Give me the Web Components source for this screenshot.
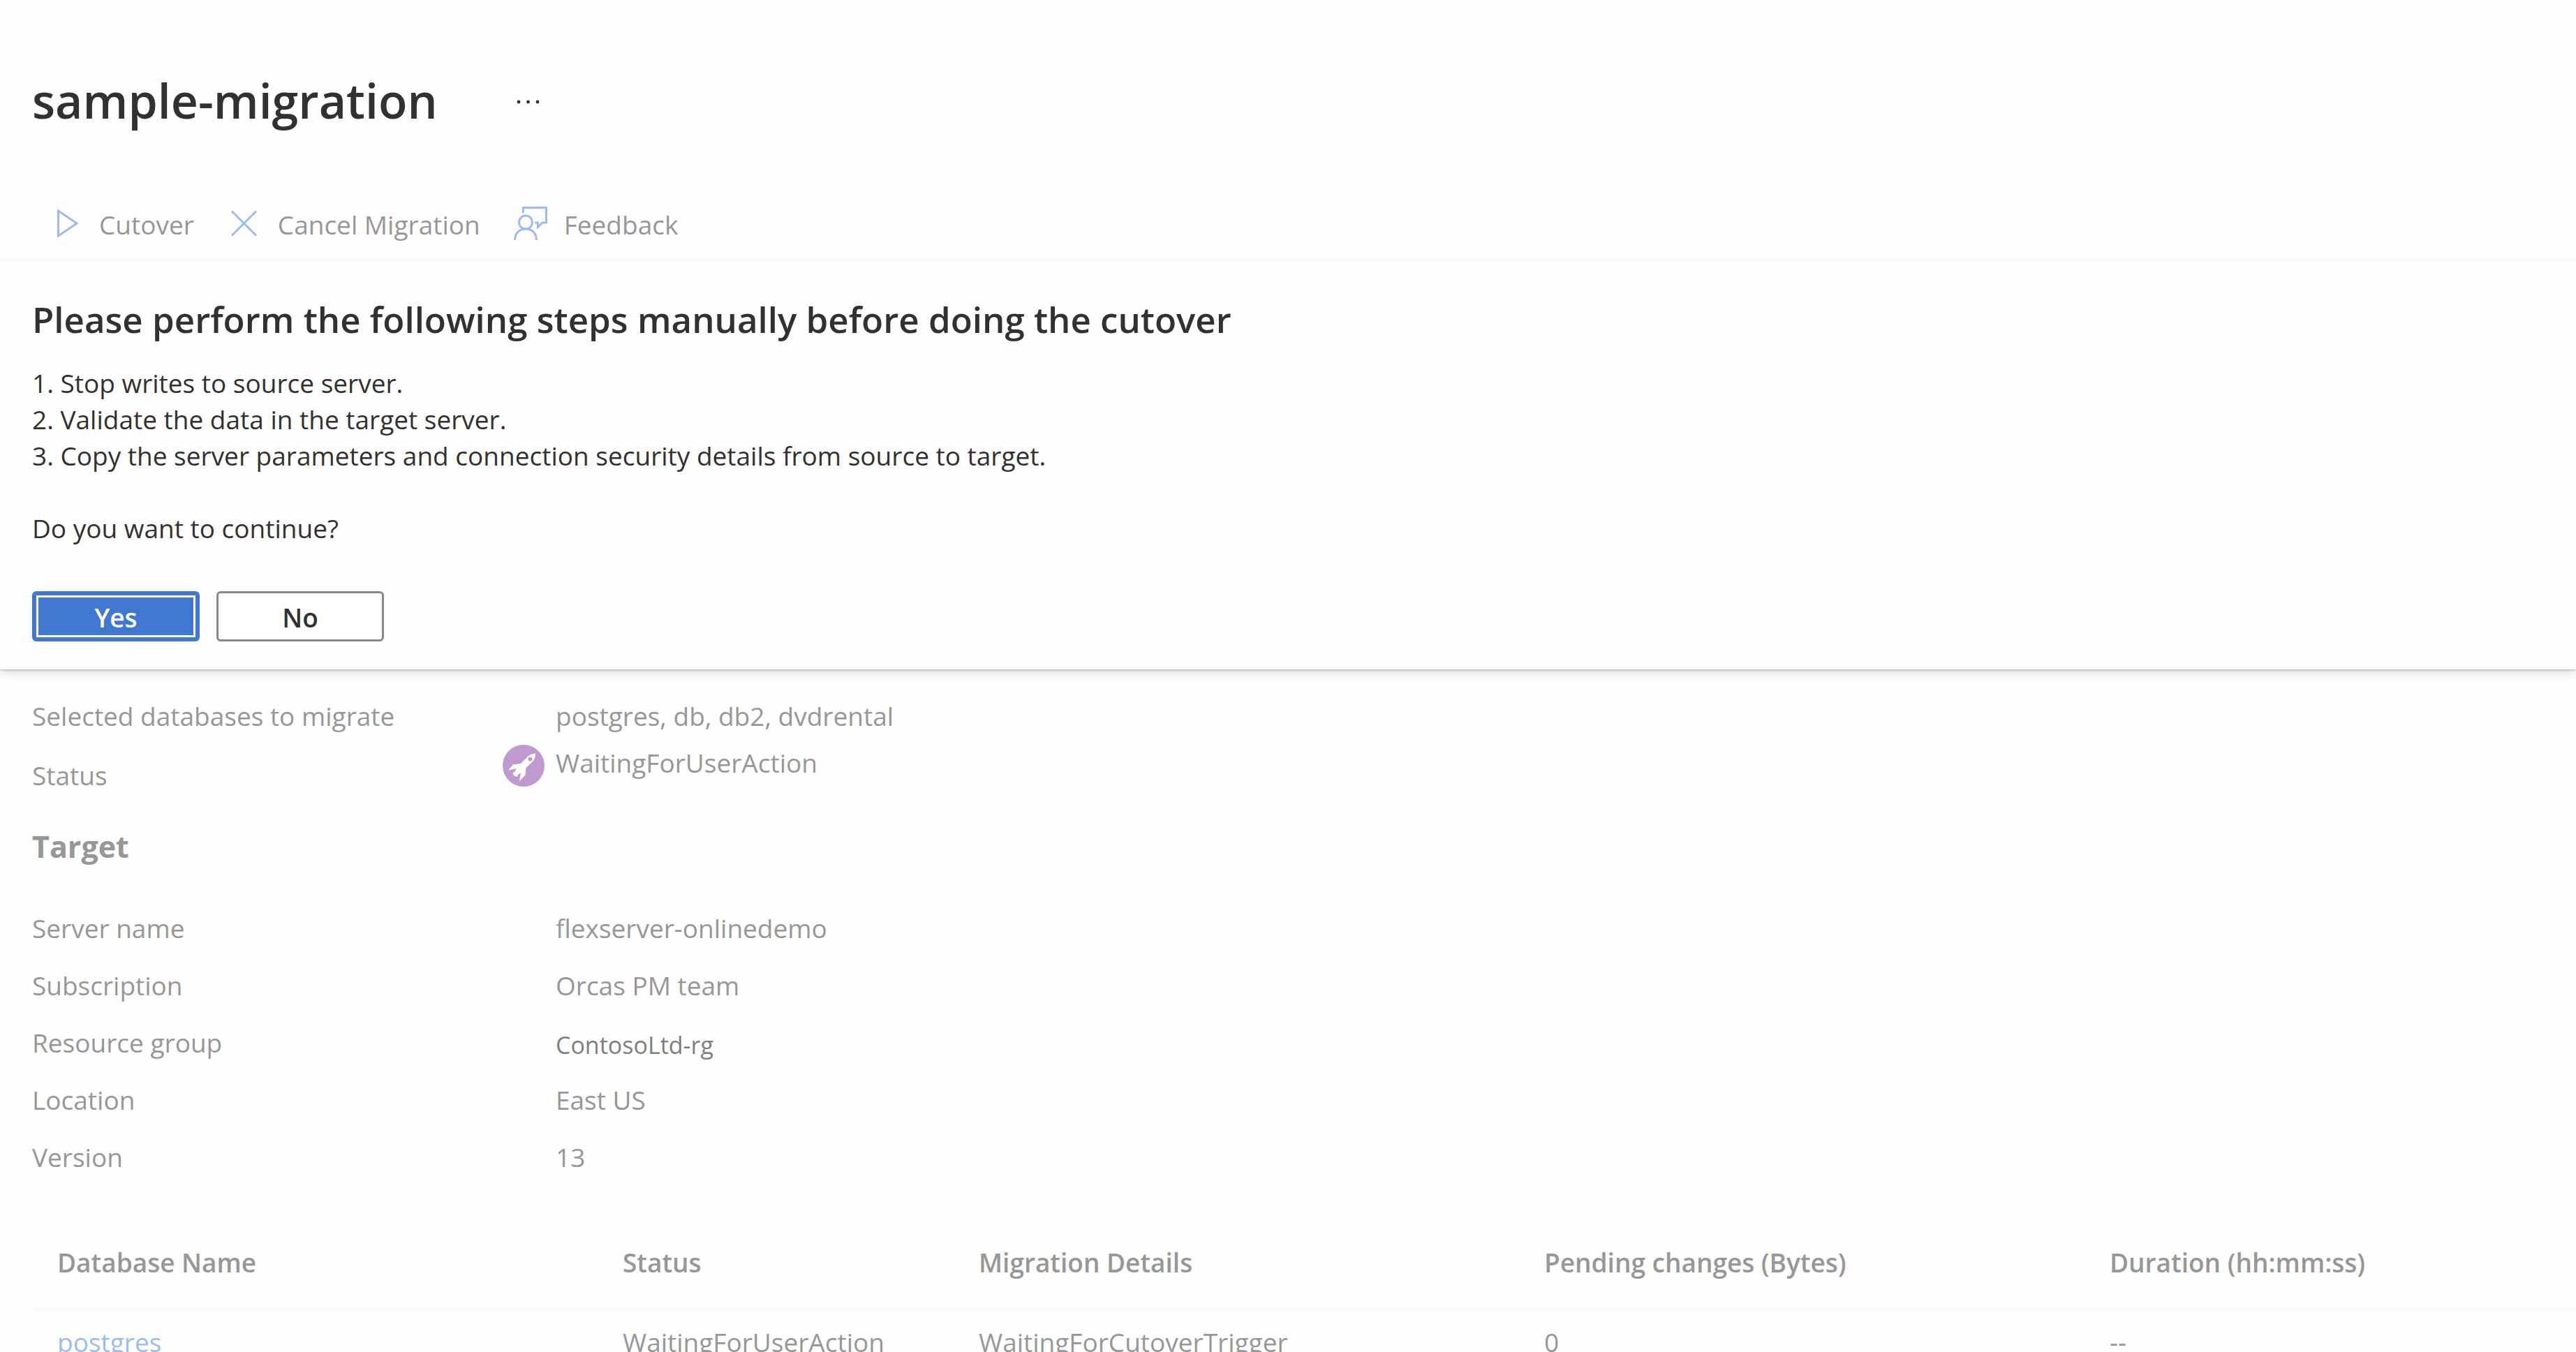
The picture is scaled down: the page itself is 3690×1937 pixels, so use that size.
<!DOCTYPE html>
<html lang="en">
<head>
<meta charset="utf-8">
<title>sample-migration</title>
<style>
html, body { margin: 0; }
body {
  background: #fefefe;
  color: #323130;
  font-family: "Open Sans", "Noto Sans", sans-serif;
  font-size: 37px;
  line-height: 52px;
  overflow: hidden;
  height: 100vh;
}
</style>
</head>
<body>
<migration-page></migration-page>

<script>
const define = (name, html) => {
  const template = document.createElement('template');
  template.innerHTML = html;
  customElements.define(name, class extends HTMLElement {
    constructor() {
      super();
      this.attachShadow({ mode: 'open' }).append(template.content.cloneNode(true));
    }
  });
};

define('page-title', `
<style>
:host { display: flex; align-items: center; gap: 94px; padding: 96px 46px 0; }
h1 { margin: 0; font-size: 68px; line-height: 96px; font-weight: 600; }
button { border: 0; background: none; padding: 0; width: 72px; height: 72px; display: grid; place-items: center; }
svg { width: 36px; height: 10px; display: block; fill: #323130; }
</style>
<h1><slot></slot></h1>
<button type="button" aria-label="More actions"><svg viewBox="0 0 36 10"><circle cx="4" cy="7" r="2.4"/><circle cx="17.500" cy="7" r="2.4"/><circle cx="31" cy="7" r="2.4"/></svg></button>`);

define('tool-button', `
<style>
:host { display: block; }
button { display: flex; align-items: flex-start; gap: 24px; border: 0; background: none; padding: 0; font: inherit; color: #979797; }
::slotted(svg) { width: 48px; height: 48px; display: block; fill: none; stroke: #9fbbe9; stroke-width: 3; }
</style>
<button type="button"><slot name="icon"></slot><slot></slot></button>`);

define('tool-bar', `
<style>
:host { display: block; }
nav { display: flex; gap: 48px; padding: 104px 70px 18px; }
.edge { height: 8px; background: linear-gradient(#fefefe, #f7f7f7); }
</style>
<nav><slot></slot></nav>
<div class="edge"></div>`);

define('push-button', `
<style>
:host { display: block; }
button { box-sizing: border-box; width: 240px; height: 72px; border: 3px solid #8a8886; border-radius: 6px; background: #fff; color: #323130; font: inherit; font-weight: 600; padding: 3px 0 0; }
:host([primary]) button { background: #4077cf; border-color: #4077cf; color: #fff; box-shadow: inset 0 0 0 3px #4077cf, inset 0 0 0 6px #fff; }
</style>
<button type="button"><slot></slot></button>`);

define('confirm-panel', `
<style>
:host { display: block; background: #fefefe; padding: 45px 46px 40px; box-shadow: 0 1px 3px rgba(0,0,0,.22), 0 4px 14px rgba(0,0,0,.15); clip-path: inset(0 0 -30px 0); }
h2 { margin: 0 0 28px; font-size: 51px; line-height: 76px; font-weight: 600; }
p { margin: 52px 0 0; }
footer { display: flex; gap: 24px; margin-top: 64px; }
</style>
<h2><slot name="heading"></slot></h2>
<slot name="steps"></slot>
<p><slot name="question"></slot></p>
<footer><slot name="actions"></slot></footer>`);

define('detail-row', `
<style>
:host { display: flex; min-height: 82px; color: #979797; }
.label { flex: 0 0 672px; }
.icon { flex: 0 0 78px; }
:host([compact]) { min-height: 67px; }
:host([small]) .value { font-size: 34px; color: #7e7e7e; padding-top: 3px; }
:host([status]) { min-height: 116px; }
:host([status]) .label { padding-top: 18px; }
</style>
<div class="label"><slot name="label"></slot></div><div class="icon"><slot name="icon"></slot></div><div class="value"><slot></slot></div>`);

define('section-heading', `
<style>
:host { display: block; }
h3 { margin: 0; font-size: 43px; line-height: 60px; font-weight: 700; color: #979797; }
</style>
<h3><slot></slot></h3>`);

define('database-table', `
<style>
:host { display: block; padding-left: 46px; color: #979797; }
table { width: 100%; border-collapse: collapse; table-layout: fixed; }
.wide { width: 810px; } .mid { width: 510px; }
th, td { text-align: left; padding: 0 0 0 36px; white-space: nowrap; }
th { font-weight: 600; height: 130px; border-bottom: 3px solid #f8f8f7; }
td { padding-top: 20px; }
a { color: #9fbbe9; text-decoration: none; }
</style>
<table>
<colgroup><col class="wide"><col class="mid"><col class="wide"><col class="wide"><col></colgroup>
<thead><tr><th>Database Name</th><th>Status</th><th>Migration Details</th><th>Pending changes (Bytes)</th><th>Duration (hh:mm:ss)</th></tr></thead>
<tbody><tr><td><a href="#postgres">postgres</a></td><td>WaitingForUserAction</td><td>WaitingForCutoverTrigger</td><td>0</td><td>--</td></tr></tbody>
</table>`);

define('migration-page', `
<style>
:host { display: block; }
.details { padding: 41px 46px 0; }
section-heading { margin-bottom: 61px; }
.rocket { width: 60px; height: 60px; display: block; margin-left: 2px; }
database-table { margin-top: 30px; }
</style>
<page-title>sample-migration</page-title>
<tool-bar>
  <tool-button><svg slot="icon" viewBox="0 0 48 48"><path d="M13.500 6V42L40 24Z"/></svg>Cutover</tool-button>
  <tool-button><svg slot="icon" viewBox="0 0 48 48"><path d="M6 6.500L41 41.500M41 6.500L6 41.500"/></svg>Cancel Migration</tool-button>
  <tool-button><svg slot="icon" viewBox="0 0 48 48"><path d="M13.500 9V1.500H46.500V23H41L34.500 29.500V23H30"/><circle cx="17" cy="22.500" r="9.500"/><path d="M1.500 48C1.500 38 8 32 17 32S32.500 38 32.500 48"/></svg>Feedback</tool-button>
</tool-bar>
<confirm-panel>
  <span slot="heading">Please perform the following steps manually before doing the cutover</span>
  <div slot="steps"><div>1. Stop writes to source server.</div><div>2. Validate the data in the target server.</div><div>3. Copy the server parameters and connection security details from source to target.</div></div>
  <span slot="question">Do you want to continue?</span>
  <push-button slot="actions" primary>Yes</push-button>
  <push-button slot="actions">No</push-button>
</confirm-panel>
<div class="details">
  <detail-row compact><span slot="label">Selected databases to migrate</span>postgres, db, db2, dvdrental</detail-row>
  <detail-row status><span slot="label">Status</span><svg slot="icon" class="rocket" viewBox="0 0 60 60"><circle cx="30" cy="30" r="30" fill="#bf9ad1"/><path fill="#fff" fill-rule="evenodd" d="M47 12.500C41 13 37 15 34 19L26 27L15 28.500L8 36.500L20 34L17 39L14.500 40L16 44L20 46L22 43L26 40L24 52L32.500 43.500L33.500 33L42 25C46 21 47 18 47 12.500ZM39.500 17.500A3 3 0 1 1 39.500 23.500A3 3 0 1 1 39.500 17.500Z"/></svg>WaitingForUserAction</detail-row>
  <section-heading>Target</section-heading>
  <detail-row><span slot="label">Server name</span>flexserver-onlinedemo</detail-row>
  <detail-row><span slot="label">Subscription</span>Orcas PM team</detail-row>
  <detail-row small><span slot="label">Resource group</span>ContosoLtd-rg</detail-row>
  <detail-row><span slot="label">Location</span>East US</detail-row>
  <detail-row><span slot="label">Version</span>13</detail-row>
</div>
<database-table></database-table>`);
</script>
</body>
</html>
